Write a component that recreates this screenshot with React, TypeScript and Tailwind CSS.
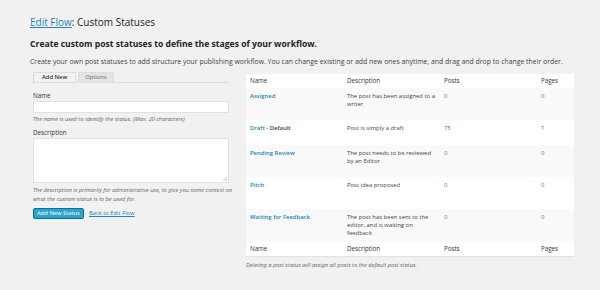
import React from 'react';

type Status = {
  name: string;
  suffix?: string;
  desc: string[];
  posts: string;
  pages: string;
  postsLink: boolean;
  h: string;
  bg: string;
};

const STATUSES: Status[] = [
  { name: 'Assigned', desc: ['The post has been assigned to a', 'writer'], posts: '0', pages: '0', postsLink: true, h: 'h-[32px]', bg: 'bg-[#f9f9f9]' },
  { name: 'Draft', suffix: ' - Default', desc: ['Post is simply a draft'], posts: '75', pages: '1', postsLink: false, h: 'h-[25px]', bg: 'bg-white' },
  { name: 'Pending Review', desc: ['The post needs to be reviewed', 'by an Editor'], posts: '0', pages: '0', postsLink: true, h: 'h-[32px]', bg: 'bg-[#f9f9f9]' },
  { name: 'Pitch', desc: ['Post idea proposed'], posts: '0', pages: '0', postsLink: true, h: 'h-[32px]', bg: 'bg-white' },
  { name: 'Waiting for Feedback', desc: ['The post has been sent to the', 'editor, and is waiting on', 'feedback'], posts: '0', pages: '0', postsLink: true, h: 'h-[33px]', bg: 'bg-[#f9f9f9]' },
];

const HeadRow: React.FC = () => (
  <div className="grid grid-cols-[97px_97px_97px_1fr] h-[14px] items-center bg-white text-[6.2px] text-[#333]">
    <div className="pl-[4px]">Name</div>
    <div className="pl-[4px]">Description</div>
    <div className="pl-[4px]">Posts</div>
    <div className="pl-[4px]">Pages</div>
  </div>
);

export default function App() {
  return (
    <div className="w-[600px] h-[290px] overflow-hidden bg-[#f1f1f1] font-['Open_Sans',sans-serif] text-[#444] pl-[30px] pr-[26px] pt-[14px]">
      <h2 className="text-[10px] leading-[16px] text-[#222]">
        <a className="text-[#2185b6] underline">Edit Flow</a>: Custom Statuses
      </h2>
      <h3 className="mt-[7px] text-[8.6px] leading-[14px] font-bold text-[#222]">
        Create custom post statuses to define the stages of your workflow.
      </h3>
      <p className="mt-[6px] text-[6.9px] leading-[10px] whitespace-nowrap">
        Create your own post statuses to add structure your publishing workflow. You can change existing or add new ones anytime, and drag and drop to change their order.
      </p>

      <div className="mt-[6px] flex gap-[17px]">
        {/* Left: add form */}
        <div className="ml-[3px] w-[196px]">
          <div className="flex items-end h-[10px] border-b border-dotted border-[#ccc]">
            <div className="h-[10px] px-[8px] flex items-center border-x border-t border-[#ddd] text-[5.8px] font-semibold text-[#333]">
              Add New
            </div>
            <div className="ml-[2px] h-[10px] px-[6px] flex items-center border border-b-0 border-[#ddd] bg-[#e4e4e4] text-[5.8px] text-[#666]">
              Options
            </div>
          </div>

          <div className="mt-[8px] text-[6.3px] leading-[9px] text-[#333]">Name</div>
          <div className="mt-[1px] h-[12px] bg-white border border-[#e2e2e2]" />
          <p className="mt-[2px] text-[5.75px] leading-[8px] italic text-[#666] whitespace-nowrap">
            The name is used to identify the status. (Max: 20 characters)
          </p>

          <div className="mt-[5px] text-[6.3px] leading-[9px] text-[#333]">Description</div>
          <div className="mt-[1px] h-[45px] bg-white border border-[#e2e2e2] relative">
            <svg className="absolute right-[1px] bottom-[1px]" width="4" height="4" viewBox="0 0 4 4">
              <path d="M0 4 L4 0 M2 4 L4 2" stroke="#aaa" strokeWidth="0.6" />
            </svg>
          </div>
          <p className="mt-[3px] text-[5.75px] leading-[9px] italic text-[#666] whitespace-nowrap">
            The description is primarily for administrative use, to give you some context on
            <br />
            what the custom status is to be used for.
          </p>

          <div className="mt-[4px] flex items-center gap-[5px]">
            <button className="h-[11px] w-[51px] rounded-[2px] bg-[#2ea2cc] border border-[#0074a2] text-white text-[5.8px] leading-none">
              Add New Status
            </button>
            <a className="text-[5.8px] text-[#2185b6] underline">Back to Edit Flow</a>
          </div>
        </div>

        {/* Right: status table */}
        <div className="mt-[1px] w-[328px]">
          <div className="shadow-[0_1px_1px_rgba(0,0,0,0.05)]">
            <HeadRow />
            {STATUSES.map((s) => (
              <div
                key={s.name}
                className={`grid grid-cols-[97px_97px_97px_1fr] ${s.h} ${s.bg} pt-[4px] text-[5.9px] leading-[8px]`}
              >
                <div className="pl-[4px] whitespace-nowrap">
                  <a className="font-semibold text-[#2185b6]">{s.name}</a>
                  {s.suffix && <span className="font-semibold text-[#444]">{s.suffix}</span>}
                </div>
                <div className="pl-[4px] whitespace-nowrap">
                  {s.desc.map((line, i) => (
                    <div key={i}>{line}</div>
                  ))}
                </div>
                <div className="pl-[4px] text-[#2185b6]">{s.posts}</div>
                <div className={`pl-[4px] ${s.postsLink ? 'text-[#2185b6]' : 'text-[#444]'}`}>{s.pages}</div>
              </div>
            ))}
            <HeadRow />
          </div>
          <p className="mt-[5px] text-[5.75px] leading-[8px] italic text-[#666]">
            Deleting a post status will assign all posts to the default post status.
          </p>
        </div>
      </div>
    </div>
  );
}
